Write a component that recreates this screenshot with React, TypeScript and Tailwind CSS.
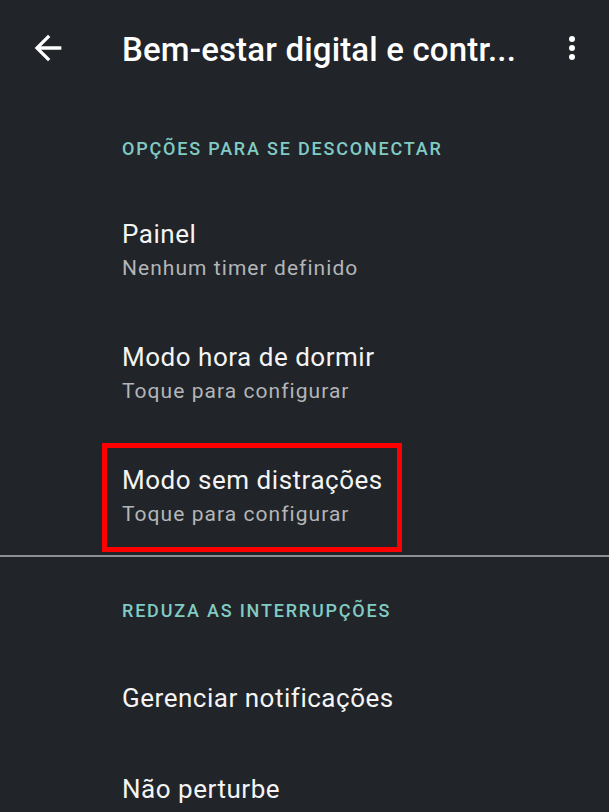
import React from 'react';

type Item = { title: string; subtitle?: string; highlighted?: boolean };

const font = { fontFamily: 'Roboto, "Noto Sans", sans-serif' };

const BackArrow: React.FC = () => (
  <svg width="40" height="40" viewBox="0 0 24 24" fill="#ffffff">
    <path d="M20 11H7.83l5.59-5.59L12 4l-8 8 8 8 1.41-1.41L7.83 13H20v-2z" />
  </svg>
);

const MoreVert: React.FC = () => (
  <svg width="36" height="36" viewBox="0 0 24 24" fill="#ffffff">
    <circle cx="12" cy="6" r="2" />
    <circle cx="12" cy="12" r="2" />
    <circle cx="12" cy="18" r="2" />
  </svg>
);

const SectionHeader: React.FC<{ label: string; className?: string }> = ({ label, className }) => (
  <div className={`pl-[122px] text-[18px] leading-[24px] font-medium tracking-[0.1em] text-[#80cbc4] ${className ?? ''}`}>
    {label}
  </div>
);

const ItemText: React.FC<{ item: Item }> = ({ item }) => (
  <div>
    <div className="text-[26px] leading-[32px] tracking-[0.02em] text-[#f4f4f4]">{item.title}</div>
    {item.subtitle && (
      <div className="mt-[4px] text-[21px] leading-[28px] tracking-[0.05em] text-[#b3b5b8]">{item.subtitle}</div>
    )}
  </div>
);

const Row: React.FC<{ item: Item }> = ({ item }) => {
  if (item.highlighted) {
    // red annotation box drawn around the row
    return (
      <div className="pl-[102px] pt-[9px] pb-[3px]">
        <div className="w-[300px] border-[5px] border-[#ff0000] pl-[15px] pt-[16px] pb-[19px]">
          <ItemText item={item} />
        </div>
      </div>
    );
  }
  return (
    <div className="pl-[122px] pt-[30px] pb-[29px]">
      <ItemText item={item} />
    </div>
  );
};

const disconnect: Item[] = [
  { title: 'Painel', subtitle: 'Nenhum timer definido' },
  { title: 'Modo hora de dormir', subtitle: 'Toque para configurar' },
  { title: 'Modo sem distrações', subtitle: 'Toque para configurar', highlighted: true },
];

const interruptions: Item[] = [{ title: 'Gerenciar notificações' }, { title: 'Não perturbe' }];

export default function App() {
  return (
    <div className="w-[609px] h-[812px] overflow-hidden bg-[#212428]" style={font}>
      <div className="h-[96px] flex items-center">
        <div className="w-[95px] flex justify-center">
          <BackArrow />
        </div>
        <div className="flex-1 pl-[27px] mt-[4px] text-[33px] leading-[40px] font-medium tracking-[0.005em] text-white whitespace-nowrap">
          Bem-estar digital e contr...
        </div>
        <div className="w-[72px] flex justify-center pr-[2px]">
          <MoreVert />
        </div>
      </div>

      <SectionHeader label="OPÇÕES PARA SE DESCONECTAR" className="pt-[41px] pb-[27px]" />
      {disconnect.map((item) => (
        <Row key={item.title} item={item} />
      ))}

      <div className="h-[2px] bg-[#8d8f92]" />

      <SectionHeader label="REDUZA AS INTERRUPÇÕES" className="pt-[42px] pb-[29px]" />
      {interruptions.map((item) => (
        <Row key={item.title} item={item} />
      ))}
    </div>
  );
}
